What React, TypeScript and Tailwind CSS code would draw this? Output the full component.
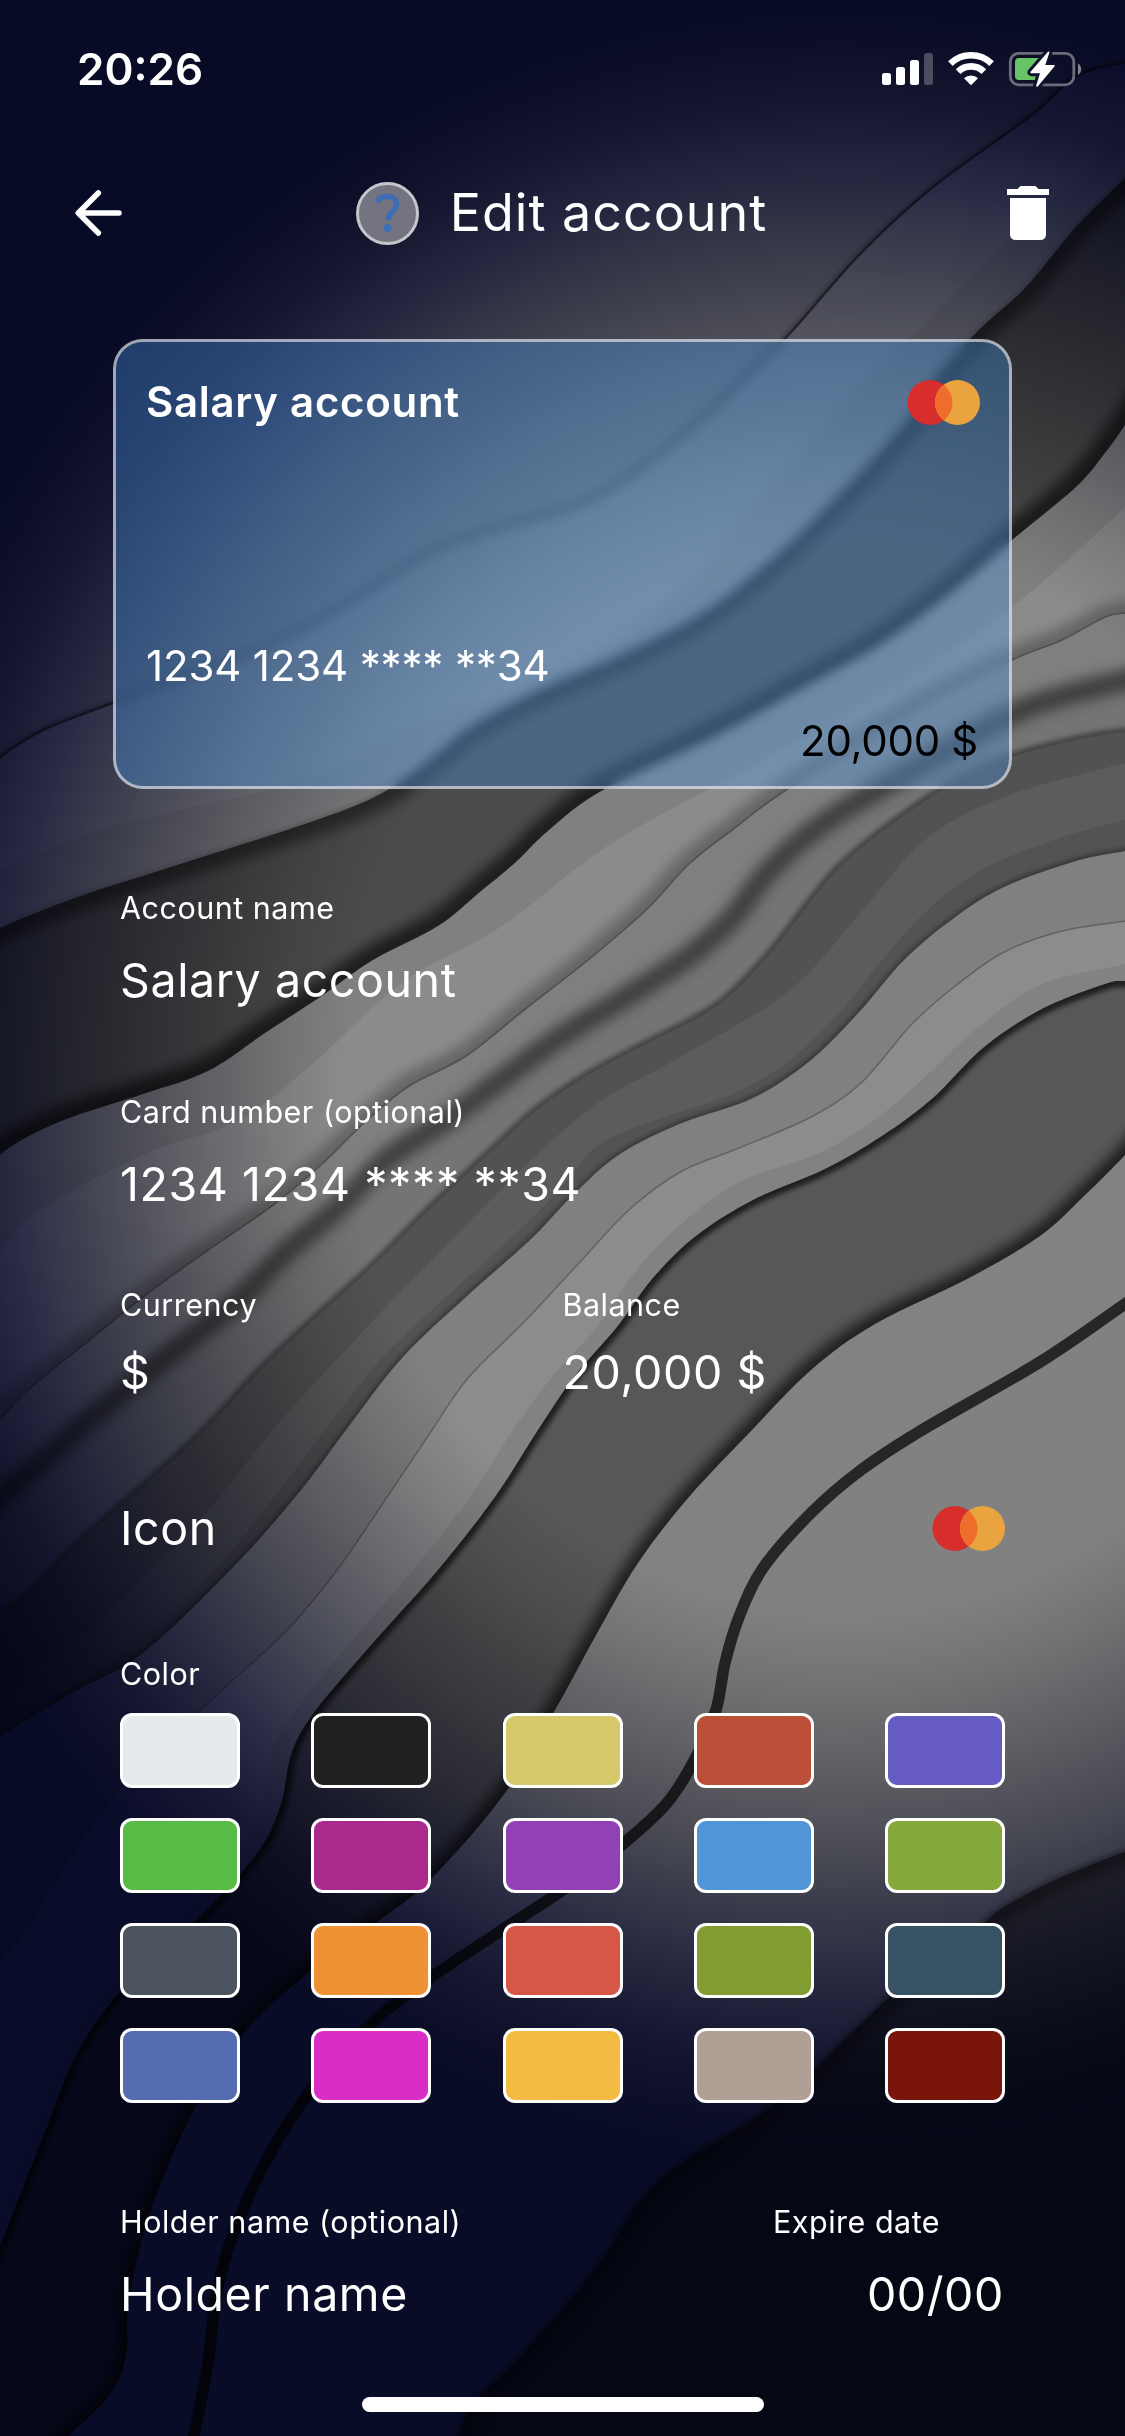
import React from "react";

type Pt = [number, number];

/** Catmull-Rom spline through the points, as cubic segments. */
function curve(p: Pt[]): string {
  let d = `M${p[0][0]} ${p[0][1]}`;
  for (let i = 0; i < p.length - 1; i++) {
    const a = p[Math.max(i - 1, 0)];
    const b = p[i];
    const c = p[i + 1];
    const e = p[Math.min(i + 2, p.length - 1)];
    const x1 = b[0] + (c[0] - a[0]) / 6;
    const y1 = b[1] + (c[1] - a[1]) / 6;
    const x2 = c[0] - (e[0] - b[0]) / 6;
    const y2 = c[1] - (e[1] - b[1]) / 6;
    d += `C${x1.toFixed(1)} ${y1.toFixed(1)} ${x2.toFixed(1)} ${y2.toFixed(1)} ${c[0]} ${c[1]}`;
  }
  return d;
}

type Shadow = [width: number, opacity: number, blur: "sm" | "lg"];

interface Fold {
  pts: Pt[];
  fill?: string;
  /** blurred shadow cast on the fold above */
  cast?: Shadow;
  /** blurred shadow inside this fold, along its own edge */
  inner?: Shadow;
  /** crisp line: width, colour */
  line?: [number, string];
  soft?: [number, string];
}

const folds: Fold[] = [
  {
    pts: [[1145, 56], [1125, 62], [1076, 76], [1033, 114], [933, 187], [861, 253], [793, 330], [760, 363], [689, 430], [596, 497], [502, 527], [430, 553], [359, 597], [287, 637], [200, 672], [115, 702], [43, 730], [0, 757], [-30, 785]],
    fill: "#868688", cast: [6, 0.3, "sm"], line: [2.5, "#38383f"],
  },
  {
    pts: [[1150, 100], [1125, 133], [1020, 230], [918, 330], [882, 363], [775, 480], [674, 597], [560, 670], [430, 720], [300, 780], [108, 828], [0, 870], [-30, 885]],
    fill: "#7e7e7f",
  },
  {
    pts: [[1150, 150], [1125, 178], [1076, 227], [1026, 287], [979, 330], [940, 373], [904, 425], [839, 495], [775, 557], [703, 613], [617, 657], [545, 688], [474, 725], [430, 760], [391, 788], [352, 807], [287, 830], [215, 853], [143, 876], [72, 899], [0, 928], [-30, 945]],
    fill: "#4b4b4b", cast: [3, 0.3, "sm"], inner: [30, 0.45, "lg"],
  },
  {
    pts: [[1150, 385], [1125, 425], [1105, 453], [1076, 487], [1012, 540], [954, 590], [882, 643], [811, 683], [717, 735], [603, 790], [549, 830], [517, 861], [481, 891], [438, 926], [373, 960], [323, 995], [265, 1033], [208, 1071], [143, 1094], [72, 1117], [29, 1136], [0, 1155], [-30, 1185]],
    fill: "#808080", cast: [30, 0.6, "lg"],
  },
  {
    pts: [[1150, 480], [1125, 507], [1033, 590], [933, 663], [789, 747], [617, 840], [502, 926], [402, 983], [309, 1067], [237, 1121], [143, 1155], [36, 1213], [0, 1251], [-30, 1280]],
    fill: "#8b8b8b",
  },
  {
    pts: [[1150, 611], [1125, 613], [1105, 617], [1062, 640], [1012, 660], [918, 707], [786, 790], [732, 830], [689, 864], [646, 910], [588, 960], [524, 1010], [466, 1056], [409, 1086], [366, 1121], [323, 1163], [273, 1205], [201, 1255], [143, 1297], [72, 1354], [29, 1389], [0, 1419], [-30, 1450]],
    fill: "#7f7f7f", cast: [24, 0.28, "lg"], line: [1.6, "#505050"],
  },
  {
    pts: [[1150, 672], [1125, 680], [1026, 708], [933, 758], [825, 822], [768, 872], [732, 918], [689, 956], [624, 998], [560, 1037], [502, 1079], [445, 1121], [387, 1159], [337, 1209], [287, 1251], [237, 1301], [165, 1358], [86, 1422], [43, 1460], [0, 1497], [-30, 1530]],
    fill: "#747474", soft: [22, "#404040"],
  },
  {
    pts: [[1150, 732], [1125, 732], [1076, 740], [1012, 757], [954, 783], [884, 830], [839, 868], [804, 910], [768, 956], [717, 1006], [646, 1044], [588, 1075], [538, 1109], [495, 1148], [430, 1209], [373, 1266], [309, 1324], [258, 1373], [205, 1430], [151, 1480], [86, 1537], [36, 1587], [0, 1617], [-30, 1645]],
    fill: "#525252", cast: [9, 0.42, "sm"],
  },
  {
    pts: [[1150, 758], [1125, 763], [1004, 797], [925, 840], [861, 912], [789, 991], [682, 1056], [595, 1105], [517, 1174], [430, 1262], [350, 1345], [273, 1430], [200, 1520], [100, 1620], [0, 1700], [-30, 1720]],
    fill: "#5c5c5c",
  },
  {
    pts: [[1150, 812], [1125, 820], [1060, 838], [985, 868], [930, 908], [882, 960], [842, 1010], [790, 1060], [733, 1094], [665, 1117], [600, 1144], [556, 1194], [510, 1239], [446, 1297], [382, 1358], [325, 1430], [280, 1490], [220, 1563], [130, 1648], [60, 1690], [0, 1725], [-30, 1750]],
    fill: "#535353",
  },
  {
    pts: [[1150, 845], [1125, 851], [1076, 861], [1004, 887], [954, 918], [904, 960], [861, 1010], [811, 1060], [753, 1098], [682, 1123], [620, 1154], [574, 1194], [531, 1239], [466, 1297], [402, 1358], [346, 1430], [301, 1490], [237, 1563], [143, 1653], [72, 1693], [0, 1737], [-30, 1765]],
    fill: "#808080", cast: [5, 0.4, "sm"],
  },
  {
    pts: [[1150, 916], [1125, 921], [1062, 931], [1004, 952], [954, 987], [911, 1025], [861, 1083], [811, 1117], [739, 1148], [682, 1171], [631, 1208], [578, 1264], [524, 1322], [468, 1378], [432, 1430], [387, 1497], [337, 1570], [287, 1630], [222, 1690], [158, 1750], [108, 1803], [65, 1863], [29, 1923], [0, 1960], [-30, 2000]],
    fill: "#8c8c8c", line: [1.5, "#626262"],
  },
  {
    pts: [[1150, 955], [1125, 964], [1040, 985], [975, 1030], [922, 1080], [872, 1122], [815, 1155], [740, 1182], [680, 1225], [635, 1272], [597, 1327], [552, 1377], [513, 1430], [470, 1497], [413, 1570], [350, 1643], [296, 1710], [272, 1752], [262, 1807], [240, 1850], [180, 1923], [108, 1990], [69, 2050], [33, 2137], [-10, 2247]],
    fill: "#828282",
  },
  {
    pts: [[1150, 980], [1125, 981], [1105, 984], [1040, 1010], [983, 1048], [933, 1098], [882, 1136], [825, 1169], [753, 1200], [696, 1236], [653, 1278], [617, 1327], [574, 1377], [538, 1430], [495, 1497], [438, 1570], [373, 1643], [316, 1710], [292, 1752], [280, 1807], [256, 1855], [194, 1923], [126, 1985], [79, 2050], [43, 2137], [0, 2247], [-20, 2300]],
    fill: "#575757", inner: [12, 0.65, "sm"],
  },
  {
    pts: [[1150, 1125], [1125, 1155], [1083, 1197], [1040, 1236], [969, 1278], [875, 1324], [811, 1370], [752, 1430], [689, 1497], [638, 1563], [595, 1637], [555, 1710], [502, 1797], [430, 1880], [380, 1920], [308, 1973], [244, 2033], [194, 2110], [151, 2210], [129, 2300], [126, 2357], [108, 2397], [68, 2436], [40, 2460]],
    fill: "#828282", cast: [20, 0.66, "lg"],
  },
  {
    pts: [[1150, 1288], [1125, 1304], [1040, 1362], [922, 1430], [861, 1470], [811, 1513], [763, 1568], [739, 1617], [725, 1663], [716, 1710], [696, 1757], [667, 1803], [624, 1843], [567, 1887], [502, 1930], [430, 1978], [373, 2022], [311, 2090], [265, 2163], [232, 2237], [216, 2297], [208, 2363], [194, 2436], [190, 2460]],
    fill: "#818181", line: [11.5, "#262626"],
  },
  {
    pts: [[1150, 1845], [1125, 1852], [1062, 1877], [1004, 1907], [976, 1930], [890, 1997], [811, 2073], [753, 2120], [682, 2163], [639, 2203], [595, 2270], [524, 2353], [474, 2403], [459, 2436], [455, 2460]],
    fill: "#464646", cast: [6, 0.4, "sm"], inner: [24, 0.4, "lg"],
  },
];

const blurs = { sm: "url(#blur-sm)", lg: "url(#blur-lg)" };

function Wallpaper() {
  return (
    <svg className="absolute inset-0 h-[2436px] w-[1125px]" viewBox="0 0 1125 2436" aria-hidden="true">
      <defs>
        <filter id="blur-sm" filterUnits="userSpaceOnUse" x="-60" y="-60" width="1245" height="2556">
          <feGaussianBlur stdDeviation="2.6" />
        </filter>
        <filter id="blur-lg" filterUnits="userSpaceOnUse" x="-60" y="-60" width="1245" height="2556">
          <feGaussianBlur stdDeviation="6.5" />
        </filter>
        <radialGradient id="light" gradientUnits="userSpaceOnUse" cx="0" cy="0" r="1" gradientTransform="translate(840 1080) scale(1010 1085)">
          <stop offset="0" stopColor="#ffffff" />
          <stop offset="0.49" stopColor="#ffffff" />
          <stop offset="0.56" stopColor="#e2e2e6" />
          <stop offset="0.64" stopColor="#b8b8c2" />
          <stop offset="0.74" stopColor="#80839a" />
          <stop offset="0.83" stopColor="#4c5080" />
          <stop offset="0.9" stopColor="#292c5e" />
          <stop offset="0.96" stopColor="#171b50" />
          <stop offset="1" stopColor="#0f164a" />
        </radialGradient>
      </defs>
      <rect width="1125" height="2436" fill="#7e7e80" />
      {folds.map((f, i) => {
        const d = curve(f.pts);
        const area = `${d}L-60 2480L1160 2480L1160 ${f.pts[0][1]}Z`;
        return (
          <g key={i}>
            {f.cast && <path d={d} fill="none" stroke="#000" strokeOpacity={f.cast[1]} strokeWidth={f.cast[0]} filter={blurs[f.cast[2]]} />}
            {f.fill && <path d={area} fill={f.fill} />}
            {f.inner && (
              <>
                <clipPath id={`fold-${i}`}>
                  <path d={area} />
                </clipPath>
                <g clipPath={`url(#fold-${i})`}>
                  <path d={d} fill="none" stroke="#000" strokeOpacity={f.inner[1]} strokeWidth={f.inner[0]} filter={blurs[f.inner[2]]} />
                </g>
              </>
            )}
            {f.soft && <path d={d} fill="none" stroke={f.soft[1]} strokeWidth={f.soft[0]} filter={blurs.lg} />}
            {f.line && <path d={d} fill="none" stroke={f.line[1]} strokeWidth={f.line[0]} />}
          </g>
        );
      })}
      <rect className="mix-blend-multiply" width="1125" height="2436" fill="url(#light)" />
    </svg>
  );
}

function Mastercard() {
  return (
    <svg className="h-[46px] w-[73px]" viewBox="0 0 73 46">
      <circle cx="23" cy="23.5" r="22.5" fill="#d82e2b" />
      <circle cx="50.5" cy="23.5" r="22.5" fill="#e9a33f" />
      <path d="M36.75 5.7a22.5 22.5 0 0 1 0 35.6a22.5 22.5 0 0 1 0-35.6Z" fill="#ee6d2d" />
    </svg>
  );
}

function StatusIcons() {
  return (
    <svg className="h-[36px] w-[202px]" viewBox="0 0 202 36">
      <g fill="#fff">
        <rect x="2" y="22" width="9" height="12" rx="2.5" />
        <rect x="16" y="16" width="9" height="18" rx="2.5" />
        <rect x="30" y="9" width="9" height="25" rx="2.5" />
        <rect x="44" y="2" width="9" height="32" rx="2.5" opacity="0.25" />
      </g>
      <g fill="none" stroke="#fff" strokeWidth="6.6">
        <path d="M70.4 12.6A29.5 29.5 0 0 1 111.6 12.6" />
        <path d="M78.1 20.6A18.6 18.6 0 0 1 103.9 20.6" />
      </g>
      <path d="M91 34.3L84 27.3A10 10 0 0 1 98 27.3Z" fill="#fff" />
      <rect x="130.3" y="2.3" width="63.5" height="31.5" rx="8.5" fill="none" stroke="#6c6c7d" strokeWidth="2.8" />
      <path d="M198 12.5a6.8 6.8 0 0 1 0 11.5Z" fill="#84848f" />
      <path d="M139 7h20v22h-20q-4 0-4-4v-14q0-4 4-4Z" fill="#66c466" />
      <path
        d="M168 .8L150.8 20.5q-1.2 1.7.8 1.7h8.4l-3.9 12.6q.3 1.8 1.8.4L174.4 15.6q1.1-1.7-.8-1.7h-8.3L169.4 1.5q-.1-1.6-1.4-.7Z"
        fill="#fff" stroke="#10122d" strokeWidth="6" paintOrder="stroke" strokeLinejoin="round"
      />
    </svg>
  );
}

const swatches = [
  "bg-[#e6eaed]", "bg-[#212121]", "bg-[#d5c96b]", "bg-[#bc4f37]", "bg-[#655bc2]",
  "bg-[#58bb45]", "bg-[#aa298c]", "bg-[#9240b6]", "bg-[#5096d6]", "bg-[#85a83a]",
  "bg-[#4c555f]", "bg-[#ef9235]", "bg-[#d65745]", "bg-[#819d32]", "bg-[#365263]",
  "bg-[#546bb0]", "bg-[#da2dc8]", "bg-[#f3bb41]", "bg-[#af9f94]", "bg-[#7a150c]",
];

const label = "text-[30.5px] leading-[40px] tracking-[0.5px]";
const value = "text-[46.5px] leading-[60px] tracking-[0.6px]";

export default function App() {
  return (
    <div className="relative h-[2436px] w-[1125px] overflow-hidden bg-[#070b26] font-['Inter',sans-serif] text-white">
      <Wallpaper />
      <div className="relative flex h-full flex-col whitespace-nowrap">
        <div className="flex h-[138px] items-center justify-between pr-[43px] pl-[77px]">
          <span className="text-[44px] leading-[60px] font-semibold">20:26</span>
          <StatusIcons />
        </div>

        <header className="flex h-[150px] items-center justify-between pr-[76px] pl-[74px]">
          <svg className="h-[50px] w-[50px]" viewBox="0 0 50 50" fill="none" stroke="#fff" strokeWidth="5.6" strokeLinecap="round" strokeLinejoin="round">
            <path d="M24.3 5L4.3 25L24.3 45M5 25H45" />
          </svg>
          <div className="flex items-center gap-[31px] pr-[8px]">
            <div className="flex h-[63px] w-[63px] items-center justify-center rounded-full border-[3px] border-[#c5c6cb] bg-[#73747f]">
              <svg className="h-[40px] w-[26px]" viewBox="0 0 26 40">
                <path d="M3 9.3C5 4.8 8.7 3.3 13 3.3c5.6 0 9.4 3.3 9.4 8.2 0 7.500-8.400 7-8.400 16" fill="none" stroke="#3f6db3" strokeWidth="5.8" />
                <circle cx="13.500" cy="35" r="4" fill="#3f6db3" />
              </svg>
            </div>
            <h1 className="text-[52px] leading-[60px] font-normal tracking-[1px]">Edit account</h1>
          </div>
          <svg className="h-[54px] w-[42px]" viewBox="0 0 42 54" fill="#fff">
            <path d="M0 3h10.500l3-3h15l3 3H42v6H0ZM3 12h36v36q0 6-6 6H9q-6 0-6-6Z" />
          </svg>
        </header>

        <section className="mx-[113px] mt-[51px] flex h-[450px] flex-col rounded-[30px] border-[3px] border-[#dfe8f6]/70 bg-[rgb(75_155_238/0.35)] bg-clip-padding pt-[30px] pr-[29px] pb-[15px] pl-[30px] backdrop-blur-[6px]">
          <div className="flex h-[60px] items-center justify-between">
            <h2 className="text-[42px] leading-[60px] font-semibold tracking-[0.7px]">Salary account</h2>
            <Mastercard />
          </div>
          <div className="mt-auto text-[42px] leading-[60px] tracking-[-0.15px]">1234 1234 **** **34</div>
          <div className="mt-[15px] pr-[2px] text-right text-[42px] leading-[60px] tracking-[-0.3px] text-black">20,000 $</div>
        </section>

        <main className="mt-[99px] flex flex-col px-[120px]">
          <div className={label}>Account name</div>
          <div className={`${value} mt-[22px]`}>Salary account</div>
          <div className={`${label} mt-[82px]`}>Card number (optional)</div>
          <div className={`${value} mt-[22px]`}>1234 1234 **** **34</div>

          <div className="mt-[71px] grid grid-cols-2">
            <div>
              <div className={label}>Currency</div>
              <div className={`${value} mt-[17px]`}>$</div>
            </div>
            <div>
              <div className={label}>Balance</div>
              <div className={`${value} mt-[17px]`}>20,000 $</div>
            </div>
          </div>

          <div className="mt-[96px] flex h-[60px] items-center justify-between">
            <span className={value}>Icon</span>
            <Mastercard />
          </div>

          <div className={`${label} mt-[96px]`}>Color</div>
          <div className="mt-[19px] grid grid-cols-[repeat(5,120px)] justify-between gap-y-[30px]">
            {swatches.map((c) => (
              <button key={c} aria-label="Color" className={`h-[75px] rounded-[12px] border-[3px] border-white ${c}`} />
            ))}
          </div>

          <div className="mt-[99px] flex justify-between">
            <div>
              <div className={label}>Holder name (optional)</div>
              <div className={`${value} mt-[22px]`}>Holder name</div>
            </div>
            <div className="w-[232px]">
              <div className={label}>Expire date</div>
              <div className={`${value} mt-[22px] pr-px text-right`}>00/00</div>
            </div>
          </div>
        </main>

        <div className="mt-[73px] h-[15px] w-[402px] self-center rounded-full bg-white" />
      </div>
    </div>
  );
}
